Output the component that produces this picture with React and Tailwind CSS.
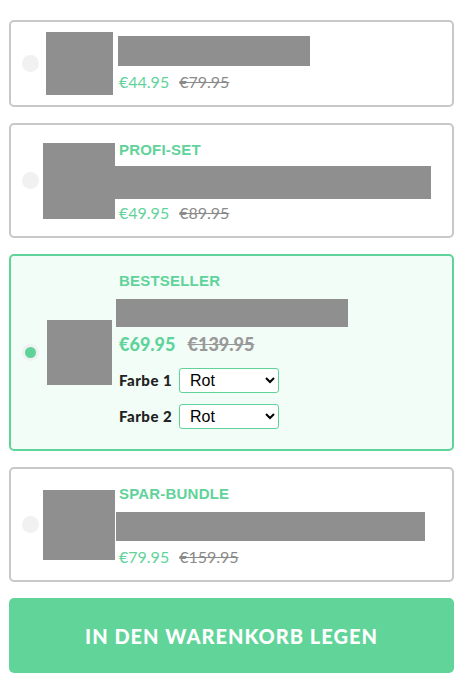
const Radio = ({ checked }) => (
  <div className="w-[17px] h-[17px] shrink-0 rounded-full bg-[#f1f1f1] flex items-center justify-center">
    {checked && <div className="w-[11px] h-[11px] rounded-full bg-[#5fd39a]" />}
  </div>
);

const Thumb = ({ w, h }) => (
  <div className="w-[80px] shrink-0 flex justify-center">
    <div className="bg-[#8f8f8f]" style={{ width: w, height: h }} />
  </div>
);

const Bar = ({ w, h, ml }) => (
  <div className="bg-[#8f8f8f]" style={{ width: w, height: h, marginLeft: ml }} />
);

const Price = ({ now, old }) => (
  <div className="flex items-center gap-[10px] h-[20px] text-[16px] leading-[20px]">
    <span className="text-[#5fd39a]">{now}</span>
    <span className="text-[#8a8a8a] line-through">{old}</span>
  </div>
);

const Label = ({ children }) => (
  <div
    className="h-[18px] leading-[18px] text-[15px] font-bold text-[#5fd39a] tracking-[0.2px]"
    style={{ fontFamily: '"Liberation Sans", Arial, sans-serif' }}
  >
    {children}
  </div>
);

const ColorSelect = ({ label }) => (
  <div className="flex items-center gap-[7px]">
    <span className="text-[15px] font-black text-[#222] tracking-[0.5px] w-[53px] whitespace-nowrap">
      {label}
    </span>
    <select
      className="w-[100px] h-[25px] border border-[#5fd39a] rounded-[3px] bg-white text-[16px] text-black pl-[6px]"
      style={{ fontFamily: '"Liberation Sans", Arial, sans-serif' }}
      defaultValue="Rot"
    >
      <option>Rot</option>
      <option>Blau</option>
      <option>Schwarz</option>
    </select>
  </div>
);

export default function App() {
  return (
    <div
      className="w-[467px] h-[694px] bg-white px-[9px] pt-[20px] flex flex-col gap-[16px]"
      style={{ fontFamily: 'Lato, "Open Sans", sans-serif' }}
    >
      {/* Option 1 */}
      <div className="w-[445px] h-[87px] border-2 border-[#c8c8c8] rounded-[5px] pl-[11px] flex items-center">
        <Radio />
        <Thumb w={67} h={63} />
        <div className="flex flex-col">
          <Bar w={192} h={30} ml={-1} />
          <div className="mt-[6px]">
            <Price now="€44.95" old="€79.95" />
          </div>
        </div>
      </div>

      {/* Option 2 */}
      <div className="w-[445px] h-[115px] border-2 border-[#c8c8c8] rounded-[5px] pl-[11px] flex items-center">
        <Radio />
        <Thumb w={72} h={76} />
        <div className="flex flex-col pt-[3px]">
          <Label>PROFI-SET</Label>
          <div className="mt-[7px]">
            <Bar w={317} h={33} ml={-5} />
          </div>
          <div className="mt-[4px]">
            <Price now="€49.95" old="€89.95" />
          </div>
        </div>
      </div>

      {/* Option 3 - selected */}
      <div className="w-[445px] h-[197px] border-2 border-[#5fd39a] bg-[#f3fdf8] rounded-[5px] pl-[11px] flex items-center">
        <Radio checked />
        <Thumb w={65} h={65} />
        <div className="flex flex-col -mt-[4px]">
          <Label>BESTSELLER</Label>
          <div className="mt-[9px]">
            <Bar w={232} h={28} ml={-3} />
          </div>
          <div className="mt-[6px] flex items-center gap-[12px] h-[22px] text-[18px] font-black">
            <span className="text-[#5fd39a]">€69.95</span>
            <span className="text-[#999] line-through">€139.95</span>
          </div>
          <div className="mt-[13px]">
            <ColorSelect label="Farbe 1" />
          </div>
          <div className="mt-[11px]">
            <ColorSelect label="Farbe 2" />
          </div>
        </div>
      </div>

      {/* Option 4 */}
      <div className="w-[445px] h-[115px] border-2 border-[#c8c8c8] rounded-[5px] pl-[11px] flex items-center">
        <Radio />
        <Thumb w={72} h={70} />
        <div className="flex flex-col pt-[3px]">
          <Label>SPAR-BUNDLE</Label>
          <div className="mt-[9px]">
            <Bar w={309} h={29} ml={-3} />
          </div>
          <div className="mt-[6px]">
            <Price now="€79.95" old="€159.95" />
          </div>
        </div>
      </div>

      <button className="w-[445px] h-[75px] rounded-[5px] bg-[#61d49a] text-white text-[20px] font-black uppercase tracking-[1px]">
        In den Warenkorb legen
      </button>
    </div>
  );
}
